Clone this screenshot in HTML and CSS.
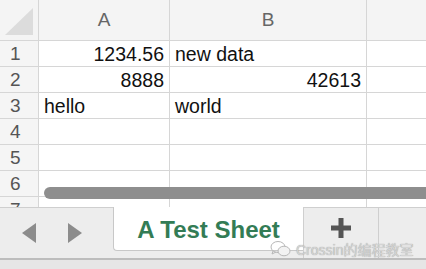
FILE: index.html
```html
<!DOCTYPE html>
<html lang="en">
<head>
  <meta charset="UTF-8">
  <title>A Test Sheet</title>
  <link rel="stylesheet" href="styles.css">
</head>
<body>
  <div class="app">
    <div class="sheet">
      <div class="grid">
        <div class="corner"><span class="corner-tri"></span></div>
        <div class="colhead">A</div>
        <div class="colhead">B</div>
        <div class="colhead"></div>

        <div class="rowhead">1</div>
        <div class="cell num">1234.56</div>
        <div class="cell">new data</div>
        <div class="cell"></div>

        <div class="rowhead">2</div>
        <div class="cell num">8888</div>
        <div class="cell num">42613</div>
        <div class="cell"></div>

        <div class="rowhead">3</div>
        <div class="cell">hello</div>
        <div class="cell">world</div>
        <div class="cell"></div>

        <div class="rowhead">4</div>
        <div class="cell"></div>
        <div class="cell"></div>
        <div class="cell"></div>

        <div class="rowhead">5</div>
        <div class="cell"></div>
        <div class="cell"></div>
        <div class="cell"></div>

        <div class="rowhead">6</div>
        <div class="cell"></div>
        <div class="cell"></div>
        <div class="cell"></div>

        <div class="rowhead">7</div>
        <div class="cell"></div>
        <div class="cell"></div>
        <div class="cell"></div>
      </div>
      <!-- horizontal scroll thumb sits over the last rows -->
      <div class="scroll-thumb"></div>
    </div>

    <div class="tabbar">
      <div class="nav">
        <span class="arrow arrow-left"></span>
        <span class="arrow arrow-right"></span>
      </div>
      <div class="tab tab-active">A Test Sheet</div>
      <div class="tab tab-add">
        <svg width="20" height="20" viewBox="0 0 20 20">
          <rect x="0" y="7.5" width="20" height="5" fill="#555"/>
          <rect x="7.5" y="0" width="5" height="20" fill="#555"/>
        </svg>
      </div>
      <div class="tab-rest"></div>
    </div>
    <div class="statusbar"></div>

    <div class="watermark">
      <svg width="22" height="18" viewBox="0 0 22 18">
        <ellipse cx="8" cy="7" rx="7" ry="5.5" fill="none" stroke="#b8b8b8" stroke-width="1"/>
        <ellipse cx="14" cy="11" rx="6" ry="4.8" fill="#f2f2f2" stroke="#b8b8b8" stroke-width="1"/>
        <path d="M3 11 L2 14 L6 12" fill="none" stroke="#b8b8b8" stroke-width="1"/>
      </svg>
      <span>Crossin的编程教室</span>
    </div>
  </div>
</body>
</html>
```

FILE: styles.css
```css
body {
  margin: 0;
  font-family: "Liberation Sans", Arial, sans-serif;
  background-color: #fff;
}

.app {
  position: relative;
  width: 426px;
  height: 269px;
  overflow: hidden;
}

.sheet {
  position: relative;
  height: 207px;
  overflow: hidden;
}

.grid {
  display: grid;
  grid-template-columns: 38px 130px 196px 1fr;
  grid-template-rows: 40px repeat(7, 25px);
  gap: 1px;
  background-color: #d6d6d6;
  border-bottom: 1px solid #d6d6d6;
}

.corner {
  background-color: #f4f4f4;
  position: relative;
}

.corner-tri {
  position: absolute;
  left: 5px;
  top: 8px;
  width: 28px;
  height: 27px;
  background-color: #dcdcdc;
  clip-path: polygon(100% 0, 100% 100%, 0 100%);
}

.colhead {
  background-color: #f4f4f4;
  color: #666;
  font-size: 19px;
  display: flex;
  align-items: center;
  justify-content: center;
}

.rowhead {
  background-color: #f5f5f5;
  color: #555;
  font-size: 19px;
  line-height: 26px;
  padding-left: 10px;
}

.cell {
  background-color: #fff;
  color: #111;
  font-size: 19.5px;
  line-height: 26px;
  padding: 0 5px;
  white-space: nowrap;
}

.cell.num {
  text-align: right;
}

.scroll-thumb {
  position: absolute;
  left: 44px;
  right: -10px;
  top: 187px;
  height: 12px;
  border-radius: 6px;
  background-color: #8e8e8e;
}

.tabbar {
  display: flex;
  height: 51px;
  background-color: #ededed;
}

.nav {
  width: 113px;
  border-top: 1px solid #cfcfcf;
  display: flex;
  align-items: center;
  gap: 32px;
  padding-left: 22px;
  box-sizing: border-box;
}

.arrow {
  width: 0;
  height: 0;
  border-top: 10.5px solid transparent;
  border-bottom: 10.5px solid transparent;
}

.arrow-left {
  border-right: 14px solid #8c8c8c;
}

.arrow-right {
  border-left: 14px solid #8c8c8c;
}

.tab {
  display: flex;
  align-items: center;
  justify-content: center;
  box-sizing: border-box;
}

.tab-active {
  width: 190px;
  height: 44px;
  background-color: #fff;
  border-left: 1px solid #c8c8c8;
  border-bottom: 1px solid #c8c8c8;
  border-bottom-left-radius: 4px;
  color: #337c55;
  font-weight: bold;
  font-size: 24px;
  padding-top: 3px;
}

.tab-add {
  width: 76px;
  border-top: 1px solid #cfcfcf;
  border-left: 1px solid #cfcfcf;
  border-right: 1px solid #cfcfcf;
  padding-bottom: 10px;
}

.tab-rest {
  flex: 1;
  border-top: 1px solid #cfcfcf;
}

.statusbar {
  height: 11px;
  border-top: 2px solid #bdbdbd;
  background-color: #e6e6e6;
  box-sizing: border-box;
}

.watermark {
  position: absolute;
  left: 270px;
  top: 239px;
  display: flex;
  align-items: center;
  gap: 4px;
  font-family: "Liberation Sans", "Noto Sans CJK SC", sans-serif;
  font-size: 14px;
  color: #d4d4d4;
  text-shadow: 0 0 1px #909090;
}
```
